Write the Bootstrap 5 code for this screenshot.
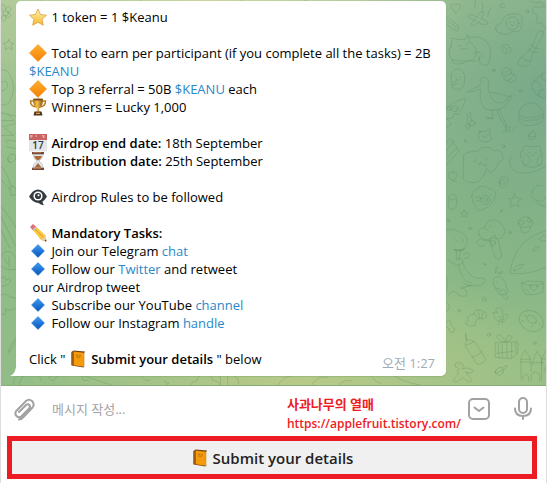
<!DOCTYPE html>
<html lang="ko">
<head>
<meta charset="utf-8">
<meta name="viewport" content="width=device-width, initial-scale=1">
<title>Airdrop chat</title>
<link rel="stylesheet" href="https://cdn.jsdelivr.net/npm/bootstrap@5.3.0/dist/css/bootstrap.min.css">
<style>
body{font-family:"Open Sans","Noto Sans CJK KR",sans-serif;font-size:13px;line-height:18px;color:#000;background:#fff}
.chat-window{border-left:1px solid #dedede;border-right:1px solid #dedede}
.chat-history{overflow:hidden;padding:1px 16px 9px 15px;border-bottom:1px solid #86ad78;
background:radial-gradient(ellipse 300px 120px at 55% 100%,#b9ca88,#b9ca8800),radial-gradient(ellipse 260px 130px at 38% 0,#c7d5a0,#c7d5a000),radial-gradient(ellipse 250px 260px at 100% 24%,#78a989,#78a98900),linear-gradient(#a9c796,#8fbc86 50%,#91bc87)}
.doodles{top:0;height:386px;fill:none;stroke:#4f8257;stroke-opacity:.3;stroke-width:2.6;stroke-linecap:round;stroke-linejoin:round}
.doodles-right{right:-1px;width:120px}
.doodles-left{left:0;width:440px}
.bubble{width:100%;max-width:430px;background:#fff;border-radius:5px 5px 5px 0;padding:7px 11px 8px 13px;box-shadow:0 1px 1px #6d9a6855}
.bubble-tail{left:-6px;bottom:0;width:6px;height:9px;fill:#fff}
.bubble a{color:#2a88c9;text-decoration:none}
.bubble b,.bot-key{font-weight:600}
.bubble p{margin:0;min-height:18px}
.emo{width:18px;height:18px;vertical-align:-2px;margin:-2px 1px -2px 0}
.sent-at{color:#a0acb6;height:18px;padding-top:4px;white-space:nowrap}
.composer{height:50px;padding:0 14px 4px 13px}
.composer input{font-size:13px;line-height:18px;padding:0;border:0;min-width:0;outline:0;background:none}
.composer input::placeholder{color:#a3a3a3;opacity:1}
.tool{border:0;padding:0;background:none;display:flex;color:#a2a2a2}
.tool svg{fill:none;stroke:currentColor;stroke-width:2;stroke-linecap:round;stroke-linejoin:round}
.credit{color:#ed1c24;font-size:12px;line-height:19px;font-weight:600;padding-top:10px;margin-right:7px}
.credit-name{font-size:13px;font-weight:700}
.bot-key{margin:0 9px 4px 6px;height:43px;border:5px solid #ed1c24;background:#f0f0f0;color:#222;font-size:15px;line-height:20px}
</style>
<script src="https://cdn.jsdelivr.net/npm/bootstrap@5.3.0/dist/js/bootstrap.bundle.min.js"></script>
</head>
<body>
<svg class="position-absolute" width="0" height="0" aria-hidden="true">
<defs>
<linearGradient id="gold" x2="0" y2="1"><stop stop-color="#fff5b0"/><stop offset="1" stop-color="#f6b82c"/></linearGradient>
<linearGradient id="orange" x2="0" y2="1"><stop stop-color="#ffb02e"/><stop offset="1" stop-color="#f67f06"/></linearGradient>
<linearGradient id="blue" x2="0" y2="1"><stop stop-color="#3c9bf2"/><stop offset="1" stop-color="#0755ba"/></linearGradient>
<linearGradient id="cup"><stop stop-color="#a3650f"/><stop offset=".4" stop-color="#f4c353"/><stop offset="1" stop-color="#8c500a"/></linearGradient>
</defs>
<symbol id="star" viewBox="0 0 18 18"><path d="M9 1l2.500 5.500 6 .7-4.400 4.100 1.200 6L9 14.300l-5.300 3 1.200-6L.5 7.200l6-.7z" fill="url(#gold)" stroke="#dba044" stroke-width=".8"/></symbol>
<symbol id="diamond" viewBox="0 0 18 18"><path d="M9 .5L17.500 9 9 17.500.5 9z" fill="url(#orange)" stroke="#ef8b16" stroke-width=".6" stroke-linejoin="round"/></symbol>
<symbol id="blue-diamond" viewBox="0 0 18 18"><path d="M9 2.500L15.500 9 9 15.500 2.500 9z" fill="url(#blue)" stroke="#2276cf" stroke-width=".5" stroke-linejoin="round"/></symbol>
<symbol id="trophy" viewBox="0 0 18 18"><path d="M4 3H1.500q0 5 5 6M14 3h2.500q0 5-5 6" fill="none" stroke="#b9771c" stroke-width="1.400"/><path d="M4 .8h10q.2 8-4 10l.5 3h-3l.5-3q-4.200-2-4-10z" fill="url(#cup)"/><ellipse cx="9" cy="1.500" rx="5" ry="1" fill="#7d4b12"/><path d="M5.500 13.500h7l1 4h-9z" fill="#51341d"/><path d="M7 14.700h4V16H7z" fill="#d9a547"/></symbol>
<symbol id="hourglass" viewBox="0 0 18 18"><path d="M4 2h10q0 5-4 7 4 2 4 7H4q0-5 4-7-4-2-4-7z" fill="#e0e6e9" stroke="#b3bbc0" stroke-width=".6"/><path d="M5 4h8q-1 3-4 4.500Q6 7 5 4zM9 11l3.500 4.500h-7z" fill="#ae6533"/><path d="M3 0h12v2.300H3zM3 15.700h12V18H3z" fill="#76462f"/><path d="M4 .7h8M4 16.400h8" stroke="#bd8c6e" stroke-width=".7"/></symbol>
<symbol id="eye" viewBox="0 0 18 18"><path d="M0 8.500Q4 1.500 9 1.500t9 7q-2 3.500-4.500 5 .2 2 1.500 3.800-3.500-.3-5.500-2.300Q4 15 0 8.500z" fill="#343b41"/><circle cx="9" cy="8" r="4.600" fill="#fff"/><circle cx="9" cy="8" r="3.100" fill="#343b41"/><circle cx="9.500" cy="7.300" r="1" fill="#fff"/></symbol>
<symbol id="pencil" viewBox="0 0 18 18"><path d="M1 3l3-3 3.500 3L4 6.500z" fill="#e46f72"/><path d="M3.300 5.700L6.700 2.300 8 3.500 4.700 7z" fill="#b8c1c4"/><path d="M4.500 6.800L8 3.400l8.500 8.200.9 5.900-5.400-1.600z" fill="#f8c83e"/><path d="M6 5l9 9" stroke="#df9c20"/><path d="M12 15.900l4.500-4.300.9 5.900z" fill="#edcaa0"/><path d="M15.400 17l1.700-1.500.3 2z" fill="#30312f"/></symbol>
<symbol id="book" viewBox="0 0 18 18"><path d="M2.500 2L4.500.5l11.500 1v14L14.500 17.500l-12-2z" fill="#704116"/><path d="M14.500 3.500L16 1.800v13.700l-1.500 1.700z" fill="#e6d7b5"/><path d="M4.500 1.500l10.200 1.300v14L4.500 15.300z" fill="#f49a0b"/><path d="M2.500 2l2-.7v14l-2-.3z" fill="#995b14"/><path d="M7 5l2 .3M10 5.500l2 .5M7.500 7l3 .3" stroke="#a4681c" stroke-width=".9"/></symbol>
</svg>

<div class="chat-window">
<main class="chat-history position-relative">
<svg class="doodles doodles-right position-absolute" viewBox="0 0 360 1158" aria-hidden="true">
<path d="M86 38q-17-15-14-23 8-8 14 1 8-9 14-1 4 9-14 23M56 48l34 26q6 5 5 14-6 8-14 2L56 70M60 60l28 23M150 52q-20-15-28-4 4 10 24 12-18 8-12 16 12 4 20-12 6 14 30 7-6-14-22-14 12-14 6-24-14 2-18 19M145 0q4 14-4 26M166 6q4 14 0 22M194 22q-12 12-12 28M220 22q-3-12 7-12 10 6 1 15-5-1-4-6"/>
<path d="M206 86q2-15 16-15 8-28 30-28 20-6 32 6 6 22-4 40-8 10-22 4-18 16-34 7-16 0-18-14z"/><circle cx="256" cy="70" r="19"/><path d="M250 66v2M262 66v2M250 75q6 6 12 0"/>
<path d="M72 140l4-26 16 4 22 1 8-15 8 22q20 18 18 35-4 24-38 22-46 2-44-24 0-12 6-19M94 136l8 2M118 132l8-4M100 148q6 4 8-4 4 6 12 1M126 112q50-8 63 30 4 30-5 50-10 8-22 0-8-6-4-22-4 18-32 13M76 178q-2 14 18 14t28-10M140 160q20-14 28 10"/>
<path d="M350 96q-16-8-20 6l-14 38q-12 18-34 32-12 12-10 20 18 12 30 6 10-10 14-34l18-36q14-20 16-32M310 134q12 14 26 12M306 146q6 14 24 12M286 172q10 16 24 10M312 4q18 8 26 2 12 0 14 14-20 4-30 0-14 14 4 22 10 12 0 24 6 8 18 2 4 14 12 16M226 138q4-8 10-4 10-2 8 6 12 2 8 10 2 10-9 8-8 6-12 0-10-2-5-10-4-8 0-10zM232 142l8 8M242 146l-6 8"/>
<circle cx="200" cy="211" r="4"/><circle cx="281" cy="273" r="4"/><circle cx="301" cy="35" r="4"/><circle cx="230" cy="439" r="4"/><circle cx="115" cy="423" r="3"/>
<path d="M72 230q3-26 24-22 18 4 17 30 0 26-16 30-24 2-23-14-2-4 4-6-8-8-6-18M84 230l5 2M97 230l5 2M90 240q4 3 7-1M75 254q7 5 11 0M92 238q-14 8-2 14M226 218q-6-12 6-13 8-6 13 2 12 0 8 13 12 2 16 14-4 12-18 13-20-4-22-20-6 0-3-9M232 228q12 0 22-10M240 242q16-4 20-18M236 215v2M244 212v2"/>
<path d="M160 245q-4-14 12-14 14 4 13 20-4 14 0 26 20 0 45 9 14 6 24 1-6 18-14 22-10 20-32 20-34 6-43-14-10-24-4-48-12 2-18 7-12 2-22 3 14-10 36-19zM190 284q4 20 22 24 20 4 34-18M196 329l2 26-26-4M198 355l-20 2M206 330l34 60-14 9M214 326l30 58M238 396l-1-20M245 396l5-17M251 395l12-12M168 242v2"/>
<path d="M60 326q20-24 56-31-4 24-22 49l-12-4-6 14-18 2M60 355q10 10 12 18l-14 10"/><circle cx="84" cy="326" r="9"/><circle cx="65" cy="325" r="7"/><circle cx="122" cy="378" r="7"/><circle cx="136" cy="370" r="8"/><path d="M122 370q-4-14 2-20M135 362q-8-12-4-24-18 6-10 12M277 350q-6-20 14-34 20-14 40-2 20 14 18 34M277 344q10 12 30 8 22 2 40-8M275 352q16 14 36 8 20 4 38-10 0 18-18 22-28 10-46 0-10-6-10-20"/>
<path d="M360 214q-10 0-20 15-20 10-27 27 8 26 30 36l17 3M344 226q-6 18 16 15M320 244q20-2 20 16M334 290q0-24 18-22M156 395q8-2 20 1 6-10 14-9-4 10 0 17 8 14-7 21-26 4-29-14 0-10 7-17zM166 408l4 1M181 405l3 1M172 412q5 3 5-2M304 408q0-8 8-8 4-10 8-8 0 10 6 12-2 16-12 15-12 0-10-11zM307 408q10 6 18 1M56 432q4-14 14-16l26 36-40 46M56 454l26-32M60 472l30-28M76 516q-18 0-10 14 2 12 14 12l10-14q0-14-14-12zM78 542l10 3"/>
<path d="M110 480q-6-20 13-22 16-8 30-3 8-16 26-12 18-2 20 10 22-8 28 11 6 20-14 23 0 18-20 29-12 0-14-10-6 20-18 32-10 14-38 8-18-4-14-22 0-22 1-44zM148 476l-7 10M175 474l8 4M152 492q4 8 9-4 4 10 16 9v-5M254 467q-20 34 16 50 44 12 90-22M280 470q0-20 10-22-4-16 12-9 14 2 26 0 16-4 12 10 10 18 2 42-18 18-48 6-12-8-4-20-4-4-10-7zM294 462q14 4 16 22-10 14-20 12M342 464q-12 4-12 26 6 10 16 1M304 458l6 1M322 458l6-1M314 466h7M220 552q-8-16 6-21 16-5 18 12-2 18-17 20-12-3-10-15 10-14 19-2-2 12-10 5"/>
<g transform="translate(0 570)">
<path d="M134 20l6-16q24-26 46-8 14 0 20 16-4 24-18 34-18 16-35 15-16-20-19-41zM145 24q6-10 16 0-2 12-12 8M186 19l8-5"/><circle cx="174" cy="30" r="14"/><circle cx="174" cy="30" r="7"/><path d="M262 11l6 13 17 1-13 11 4 15-13-7-13 8 3-16-9-10 14-2zM112 60l4 7 8 1-6 6 2 7-8-4-7 4 1-7-5-6 8-1zM64 22q16-20 24 0-4 8-12 8-12 0-12-8zM64 30v18q0 12 14 10 14-2 10-34M314 12q2-28 28-26M312 18q8 14 32 16 8-4 16-20M326 32q8 16 34 18"/>
<path d="M56 124q4-14 14-3 16-9 22 4 20 0 29 22 2 20-14 30-14 6-27 2 20 6 32-2M84 148l5 7M107 148v8M82 178q24 12 36-4M100 183l-4 28M88 184v26q10-12 20 0 2 10-17 16l-30-16M94 225q4 22 16 40 8 12 22 13M107 216q4 18 17 32 18 20 32 17 16-4 18 8-8 18-35 14-20 2-32-10M110 195q12-14 20 0-4 10-18 10M56 252q10 24 0 64M65 314q14-18 22-6 6 10 22 12 16-2 7-20-8-6-16-6 14 0 36-10"/>
<path d="M157 136q-8-22 17-24 2-20 22-22 24-2 30 18 12 10 4 26-4 14-23 13l-2-12q-12 4-14 12-24 8-34-11M174 116l10 5M188 108l6 3M188 150q14-14 26 0l10 48q-4 14-18 7l-18-54M190 152h-20q-4-8-12-5-12 6-8 14 10 14 22 4M206 248q-6-14 6-18 2 12-6 18M214 250q8-8 14-5 0 8-14 5M200 282q-6-22 12-22 12-2 22 16l10 30q-12 14-28 6-8-10-16-30M204 294q10 4 12 1l5 9 8-7 9 10M208 274l3 5M221 310l12 16q10 6 9-6l-8-12"/>
<circle cx="199" cy="159" r="7"/><path d="M273 102q0-18 20-22 20 0 24 20-4 14-22 11-20 2-22-9M278 92q14-4 14 8-8 8-18 0M301 84q8-2 12 10-8 8-12-2M280 110l2 12q10 12 26 0l2-12M249 248q6-52 40-88 32-30 71-38M249 250q60 6 111-20M260 242q-2-16 30-20-8 18-30 20M318 182q4-18 18-10-4 16-18 10M336 148q16-22 24-2-8 14-24 2M284 278q14-2 18-5l46 2q4 20-2 32-18 8-48 8-16-22-14-37M284 280l32 8M348 278l-20 12M322 302q-16-8-12-16 6-6 10 0 6-6 12 0 2 8-10 16M310 312l-12-14"/>
<path d="M124 390q-8-8 0-12l18-6q-2-14 12-12 22 0 25 17-4 14-18 8-14 0-16 14 0 14-9 7-8 8-12-2-8 4-8-6zM143 374l14 12M154 362l4 20M168 367l-4 20M207 357q10-10 20 2-2 12 2 18 14-12 12 4-6 16-22 13-16-2-17-16l-5-10 10-1zM216 394v8M226 394v8M212 368h2M215 381h14v8h-10"/>
<ellipse cx="313" cy="393" rx="38" ry="30" transform="rotate(28 313 393)"/><ellipse cx="314" cy="388" rx="16" ry="10" transform="rotate(35 314 388)"/><path d="M284 391l6 3M292 376l5 3M312 411l4-2M337 403l4 2M116 430l4 20q-8 10-4 20l33 51q18 6 27-13l-28-46q-16-16-30-12zM116 465q16-2 27-13M136 500q20-2 29-18M206 458l64-3 4 8-3 28-18 15-47-4zM214 462l2 41M225 461l2 43M239 459l2 45M254 458v46M266 455l1 36M231 456q-20-4-22-18 12-14 26 17M236 455q4-28 18-16 2 14-18 16M208 490l50-6"/>
<circle cx="172" cy="328" r="6"/><circle cx="186" cy="434" r="5"/><circle cx="96" cy="362" r="4"/><circle cx="248" cy="127" r="4"/><circle cx="223" cy="63" r="3"/><circle cx="129" cy="115" r="4"/><circle cx="64" cy="92" r="4"/><circle cx="323" cy="460" r="4"/><circle cx="173" cy="223" r="3"/><path d="M60 338q8 4 8 16l-8 10M58 398q6-14 12-4 0 14 12 20 2 18-12 12-8-16-12-18"/>
<path d="M84 526q0-14 14-8 16 4 9 14l-2 5q18-8 34 5-4 12-24 4l20 24q-8 14-28-8-18 20-28 10 4-10 16-20-10-12 1-14l-4-5q-8 0-8-7M91 523l3 1M101 522l3 1M205 547q4-18 20-14 10 12-3 22-14 2-17-8M206 542q-8 14 14 2 22-10 20-16-4-4-14 6M282 568v-62l4-12 8-14 10 16 6 10v18l6 2 4-20 10-22 12 20 4 20M282 508h28M282 516h28M314 518h34M288 572v-14q8-10 16 0v14M312 572v-18q14-16 26 0v18M344 572v-66l16-30M344 506h16M354 532v14M312 528v16"/>
</g></svg>
<svg class="doodles doodles-left position-absolute" viewBox="0 0 1320 1158" aria-hidden="true">
<circle cx="14" cy="40" r="8"/><path d="M7 34Q-6 24 2 16q12-6 11 14 10-18 17-5 0 10-11 12 17 4 8 13-10 8-14-5 4 20-6 18-10-6-2-16M24 119l4 10 11 1-9 8 4 11-11-6-10 7 2-12-8-8 11-2zM0 209q22 0 26 16 24 40-2 84Q12 320 0 314M0 248q16-12 20 6-2 20-20 18M0 338l48 12M0 362h40l-20-20M12 378l36-8M0 374l38 32H0M16 420l32 4M16 440l32 6M20 430l-8-10M28 490q-18-14 0-26 20-6 16 14-8 12-20 8-8-10 4-12M0 498q20 20 28 58l8 4M0 540l30 30M26 565q8-10 18 0l4 18-16 4zM0 620q28 30 46 64M0 650l48 96M0 690l26 54M0 770q8-22 28-14l20 18M0 798q20 16 46 10V776M8 774l12 18M24 770v30M0 834q14-8 14 7 18-14 14 5-6 10-26 14M0 886q14-10 28 6 18-2 20 14M0 940q16 16 14-14 18 12 34-6M22 1050l24-39M26 1054l22-35M24 1052q-4 12 2 2"/>
<path d="M36 1158q4-50 34-56 40 4 52 40M54 1158q4-36 28-34M150 1122q-12 10 2 20 16-2 16-20M240 1125l100 33M244 1128q-10 14 20 14M420 1128q16 20 26 12M490 1141l5 8 8 1-6 5 2 5M570 1158q0-16 18-14 0-20 26-20 22 0 20 18 22 0 24 16M658 1128v28M680 1128v28M700 1128q20 10 10 30M830 1158q14-32 54-32M930 1158q20-34 52-26M1010 1158q24-24 44-16M1110 1128q16 20 30 24M1180 1128q20 16 80 28M120 2v6M260 0l8 9M420 0v8M720 0q4 12 18 7M910 0l18 8M1180 0v8"/></svg>
<article class="bubble position-relative">
<svg class="bubble-tail position-absolute" viewBox="0 0 6 9" aria-hidden="true"><path d="M6 0v9H0q5-2 6-9z"/></svg>
<p><svg class="emo"><use href="#star"/></svg> 1 token = 1 $Keanu</p>
<p></p>
<p><svg class="emo"><use href="#diamond"/></svg> Total to earn per participant (if you complete all the tasks) = 2B <a href="#">$KEANU</a></p>
<p><svg class="emo"><use href="#diamond"/></svg> Top 3 referral = 50B <a href="#">$KEANU</a> each</p>
<p><svg class="emo"><use href="#trophy"/></svg> Winners = Lucky 1,000</p>
<p></p>
<p><svg class="emo" viewBox="0 0 18 18"><path d="M0 1h18v16.500H0z" fill="#e4e6e7"/><path d="M0 0h18v6H0z" fill="#c96262"/><path d="M1 2h3M2 1v3M6 2h2M13 1l2 3M15 1v3" stroke="#f1b6b0"/><text x="9" y="15" text-anchor="middle" font-size="10" font-weight="600" fill="#303a40">17</text></svg> <b>Airdrop end date:</b> 18th September</p>
<p><svg class="emo"><use href="#hourglass"/></svg> <b>Distribution date:</b> 25th September</p>
<p></p>
<p><svg class="emo"><use href="#eye"/></svg> Airdrop Rules to be followed</p>
<p></p>
<p><svg class="emo"><use href="#pencil"/></svg> <b>Mandatory Tasks:</b></p>
<p><svg class="emo"><use href="#blue-diamond"/></svg> Join our Telegram <a href="#">chat</a></p>
<p><svg class="emo"><use href="#blue-diamond"/></svg> Follow our <a href="#">Twitter</a> and retweet<br>&nbsp;our Airdrop tweet</p>
<p><svg class="emo"><use href="#blue-diamond"/></svg> Subscribe our YouTube <a href="#">channel</a></p>
<p><svg class="emo"><use href="#blue-diamond"/></svg> Follow our Instagram <a href="#">handle</a></p>
<p></p>
<div class="d-flex justify-content-between"><p>Click " <svg class="emo"><use href="#book"/></svg> <b>Submit your details</b> " below</p><time class="sent-at" datetime="01:27">오전 1:27</time></div>
</article>
</main>

<form class="composer d-flex align-items-center">
<button class="tool" type="button" aria-label="Attach file"><svg width="22" height="24" viewBox="0 0 22 24"><path d="M5 15l7-7q2-1.500 3.300 0t0 3.300l-7.800 8q-2.500 2-5-.3-2.300-2.500 0-5.300L12 4q3-2.500 6 0 3 3 .5 6.500L9 20.500q-2 2-4 2"/></svg></button>
<input class="flex-grow-1 ms-3" type="text" placeholder="메시지 작성..." aria-label="메시지 작성">
<div class="credit text-nowrap"><span class="credit-name">사과나무의 열매</span><br>https://applefruit.tistory.com/</div>
<button class="tool me-4" type="button" aria-label="Bot keyboard"><svg width="22" height="22" viewBox="0 0 22 22"><rect x="1" y="1" width="20" height="20" rx="4"/><path d="M6.500 9.500L11 13l4.500-3.500"/></svg></button>
<button class="tool" type="button" aria-label="Voice message"><svg width="18" height="24" viewBox="0 0 18 24"><rect x="5" y="1" width="8" height="15" rx="4"/><path d="M1 11.500q0 7.500 8 7.500t8-7.500M9 19v3"/></svg></button>
</form>
<div class="d-grid"><button class="bot-key d-flex align-items-center justify-content-center p-0" type="button"><svg class="emo me-1"><use href="#book"/></svg>Submit your details</button></div>
</div>
</body>
</html>
